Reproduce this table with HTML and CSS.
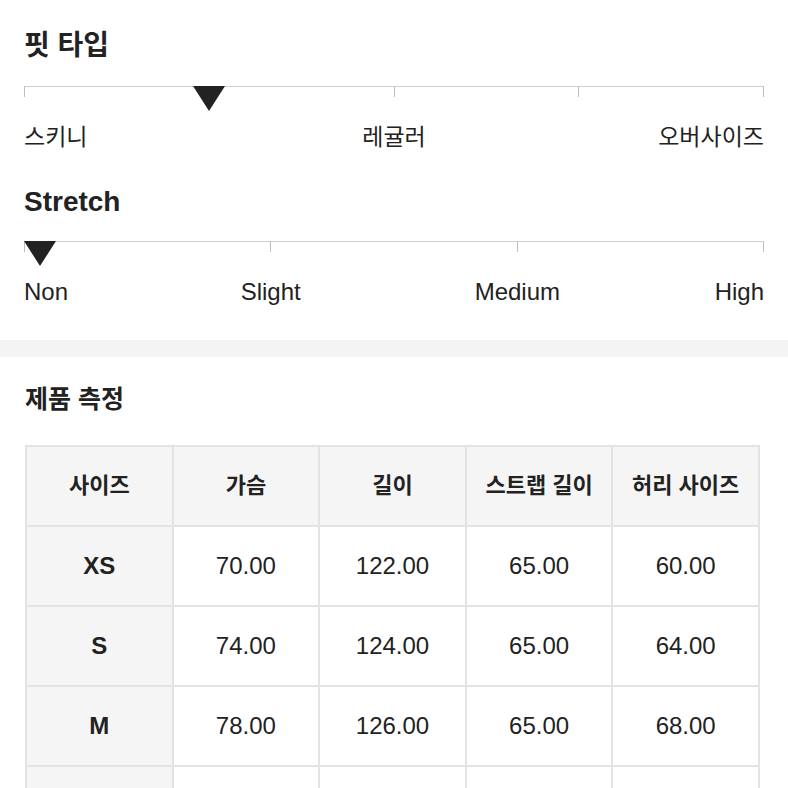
FILE: index.html
```html
<!DOCTYPE html>
<html lang="ko">
<head>
<meta charset="utf-8">
<title>Size info</title>
<link rel="stylesheet" href="styles.css">
</head>
<body>
<section class="attrs">
  <h2 class="title">핏 타입</h2>
  <div class="scale">
    <div class="track track-fit">
      <span class="seg"></span><span class="seg"></span><span class="seg"></span>
    </div>
    <span class="marker marker-fit"></span>
    <div class="labels labels-fit">
      <span class="l-start">스키니</span>
      <span class="l-mid">레귤러</span>
      <span class="l-end">오버사이즈</span>
    </div>
  </div>

  <h2 class="title title-en">Stretch</h2>
  <div class="scale scale-en">
    <div class="track track-stretch">
      <span class="seg"></span><span class="seg"></span><span class="seg"></span>
    </div>
    <span class="marker marker-stretch"></span>
    <div class="labels labels-stretch">
      <span class="l-start">Non</span>
      <span class="l-a">Slight</span>
      <span class="l-b">Medium</span>
      <span class="l-end">High</span>
    </div>
  </div>
</section>

<div class="band"></div>

<section class="measure">
  <h3 class="subtitle">제품 측정</h3>
  <table class="size-table">
    <thead>
      <tr><th>사이즈</th><th>가슴</th><th>길이</th><th>스트랩 길이</th><th>허리 사이즈</th></tr>
    </thead>
    <tbody>
      <tr><th>XS</th><td>70.00</td><td>122.00</td><td>65.00</td><td>60.00</td></tr>
      <tr><th>S</th><td>74.00</td><td>124.00</td><td>65.00</td><td>64.00</td></tr>
      <tr><th>M</th><td>78.00</td><td>126.00</td><td>65.00</td><td>68.00</td></tr>
      <tr><th>L</th><td>82.00</td><td>128.00</td><td>65.00</td><td>72.00</td></tr>
    </tbody>
  </table>
</section>
</body>
</html>
```

FILE: styles.css
```css
* { box-sizing: border-box; }

html, body {
  margin: 0;
  padding: 0;
  background: #fff;
  color: #222;
  font-family: "Liberation Sans", "Noto Sans CJK KR", sans-serif;
  overflow: hidden;
}

.attrs {
  padding: 30px 24px 34px;
}

.title {
  margin: 0;
  font-size: 28px;
  line-height: 32px;
  font-weight: 700;
  color: #222;
}

.title-en {
  margin-top: 35px;
  font-size: 28px;
}

.scale {
  position: relative;
  margin-top: 24px;
}

.scale-en {
  margin-top: 23px;
}

.track {
  display: grid;
  height: 11px;
  border-left: 1px solid #bdbdbd;
}

.track-fit { grid-template-columns: 2fr 1fr 1fr; }
.track-stretch { grid-template-columns: 1fr 1fr 1fr; }

.seg {
  border-top: 1px solid #cfcfcf;
  border-right: 1px solid #bdbdbd;
}

.marker {
  position: absolute;
  top: 0;
  width: 0;
  height: 0;
  border-left: 16px solid transparent;
  border-right: 16px solid transparent;
  border-top: 25px solid #222;
}

.marker-fit { left: 25%; transform: translateX(-50%); }
.marker-stretch { left: 0; }

.labels {
  display: grid;
  margin-top: 26px;
  font-size: 23px;
  line-height: 28px;
  color: #222;
}

.labels-fit { grid-template-columns: 2fr 1fr 1fr 2fr; }
.labels-fit .l-start { grid-column: 1; justify-self: start; }
.labels-fit .l-mid { grid-column: 2 / 4; justify-self: center; }
.labels-fit .l-end { grid-column: 4; justify-self: end; }

.labels-stretch { grid-template-columns: repeat(6, 1fr); font-size: 24px; }
.labels-stretch .l-start { grid-column: 1; justify-self: start; }
.labels-stretch .l-a { grid-column: 2 / 4; justify-self: center; }
.labels-stretch .l-b { grid-column: 4 / 6; justify-self: center; }
.labels-stretch .l-end { grid-column: 6; justify-self: end; }

.band {
  height: 17px;
  background: #f4f4f4;
}

.measure {
  padding: 27px 24px 0 25px;
}

.subtitle {
  margin: 0;
  font-size: 25px;
  line-height: 30px;
  font-weight: 700;
  color: #222;
}

.size-table {
  margin-top: 31px;
  width: 735px;
  border-collapse: separate;
  border-spacing: 0;
  table-layout: fixed;
  border-top: 2px solid #e3e3e3;
  border-left: 2px solid #e3e3e3;
}

.size-table th,
.size-table td {
  height: 80px;
  padding: 0;
  text-align: center;
  vertical-align: middle;
  border-right: 2px solid #e3e3e3;
  border-bottom: 2px solid #e3e3e3;
  font-size: 24px;
  line-height: 24px;
  color: #222;
}

.size-table thead th {
  background: #f5f5f5;
  font-size: 22px;
  font-weight: 700;
}

.size-table tbody th {
  background: #f5f5f5;
  font-weight: 700;
}

.size-table td {
  background: #fff;
  font-weight: 400;
}
```
